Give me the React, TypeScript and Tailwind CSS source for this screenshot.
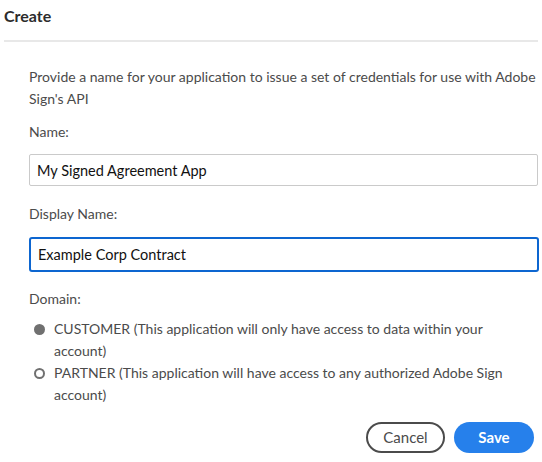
import { useState } from "react";

export default function App() {
  const [domain, setDomain] = useState<"customer" | "partner">("customer");
  const [name, setName] = useState("My Signed Agreement App");
  const [displayName, setDisplayName] = useState("Example Corp Contract");

  return (
    <div className="h-[462px] w-[542px] overflow-hidden bg-white font-['Lato',sans-serif] text-[14px] text-[#4b4b4b]">
      <div className="px-[4px] pt-[5px]">
        <h1 className="text-[16px] font-bold leading-[22px] text-[#2c2c2c]">Create</h1>
        <div className="mt-[13px] h-[2px] bg-[#e8e8e8]" />
      </div>

      <div className="pl-[29px] pr-[4px] pt-[24px]">
        <p className="leading-[22px]">
          Provide a name for your application to issue a set of credentials for use with Adobe Sign's API
        </p>

        <label className="mt-[11px] block leading-[22px]">Name:</label>
        <input
          value={name}
          onChange={(e) => setName(e.target.value)}
          className="mt-[11px] block h-[32px] w-[509px] rounded-[2px] border border-[#cacaca] px-[7px] text-[14.5px] text-[#111] outline-none"
        />

        <label className="mt-[17px] block leading-[22px]">Display Name:</label>
        <input
          value={displayName}
          onChange={(e) => setDisplayName(e.target.value)}
          className="mt-[12px] block h-[35px] w-[510px] rounded-[3px] border-2 border-[#0d66d0] px-[7px] text-[14.5px] text-[#111] outline-none"
        />

        <label className="mt-[16px] block leading-[22px]">Domain:</label>

        <div className="mt-[8px]">
          <Radio
            checked={domain === "customer"}
            onSelect={() => setDomain("customer")}
            label="CUSTOMER (This application will only have access to data within your account)"
          />
          <Radio
            checked={domain === "partner"}
            onSelect={() => setDomain("partner")}
            label="PARTNER (This application will have access to any authorized Adobe Sign account)"
          />
        </div>

        <div className="mt-[16px] flex justify-end gap-[9px] pr-[4px]">
          <button className="h-[31px] w-[79px] rounded-full border-2 border-[#4b4b4b] text-[15px] text-[#4b4b4b]">
            Cancel
          </button>
          <button className="h-[31px] w-[80px] rounded-full bg-[#2680eb] text-[15px] font-bold text-white">
            Save
          </button>
        </div>
      </div>
    </div>
  );
}

function Radio({ checked, onSelect, label }: { checked: boolean; onSelect: () => void; label: string }) {
  return (
    <button type="button" onClick={onSelect} className="flex w-[480px] items-start gap-[9px] pl-[5px] text-left">
      <span
        className={
          checked
            ? "mt-[6px] h-[11px] w-[11px] shrink-0 rounded-full bg-[#707070]"
            : "mt-[6px] h-[11px] w-[11px] shrink-0 rounded-full border-2 border-[#707070] bg-white"
        }
      />
      <span className="leading-[22px]">{label}</span>
    </button>
  );
}
